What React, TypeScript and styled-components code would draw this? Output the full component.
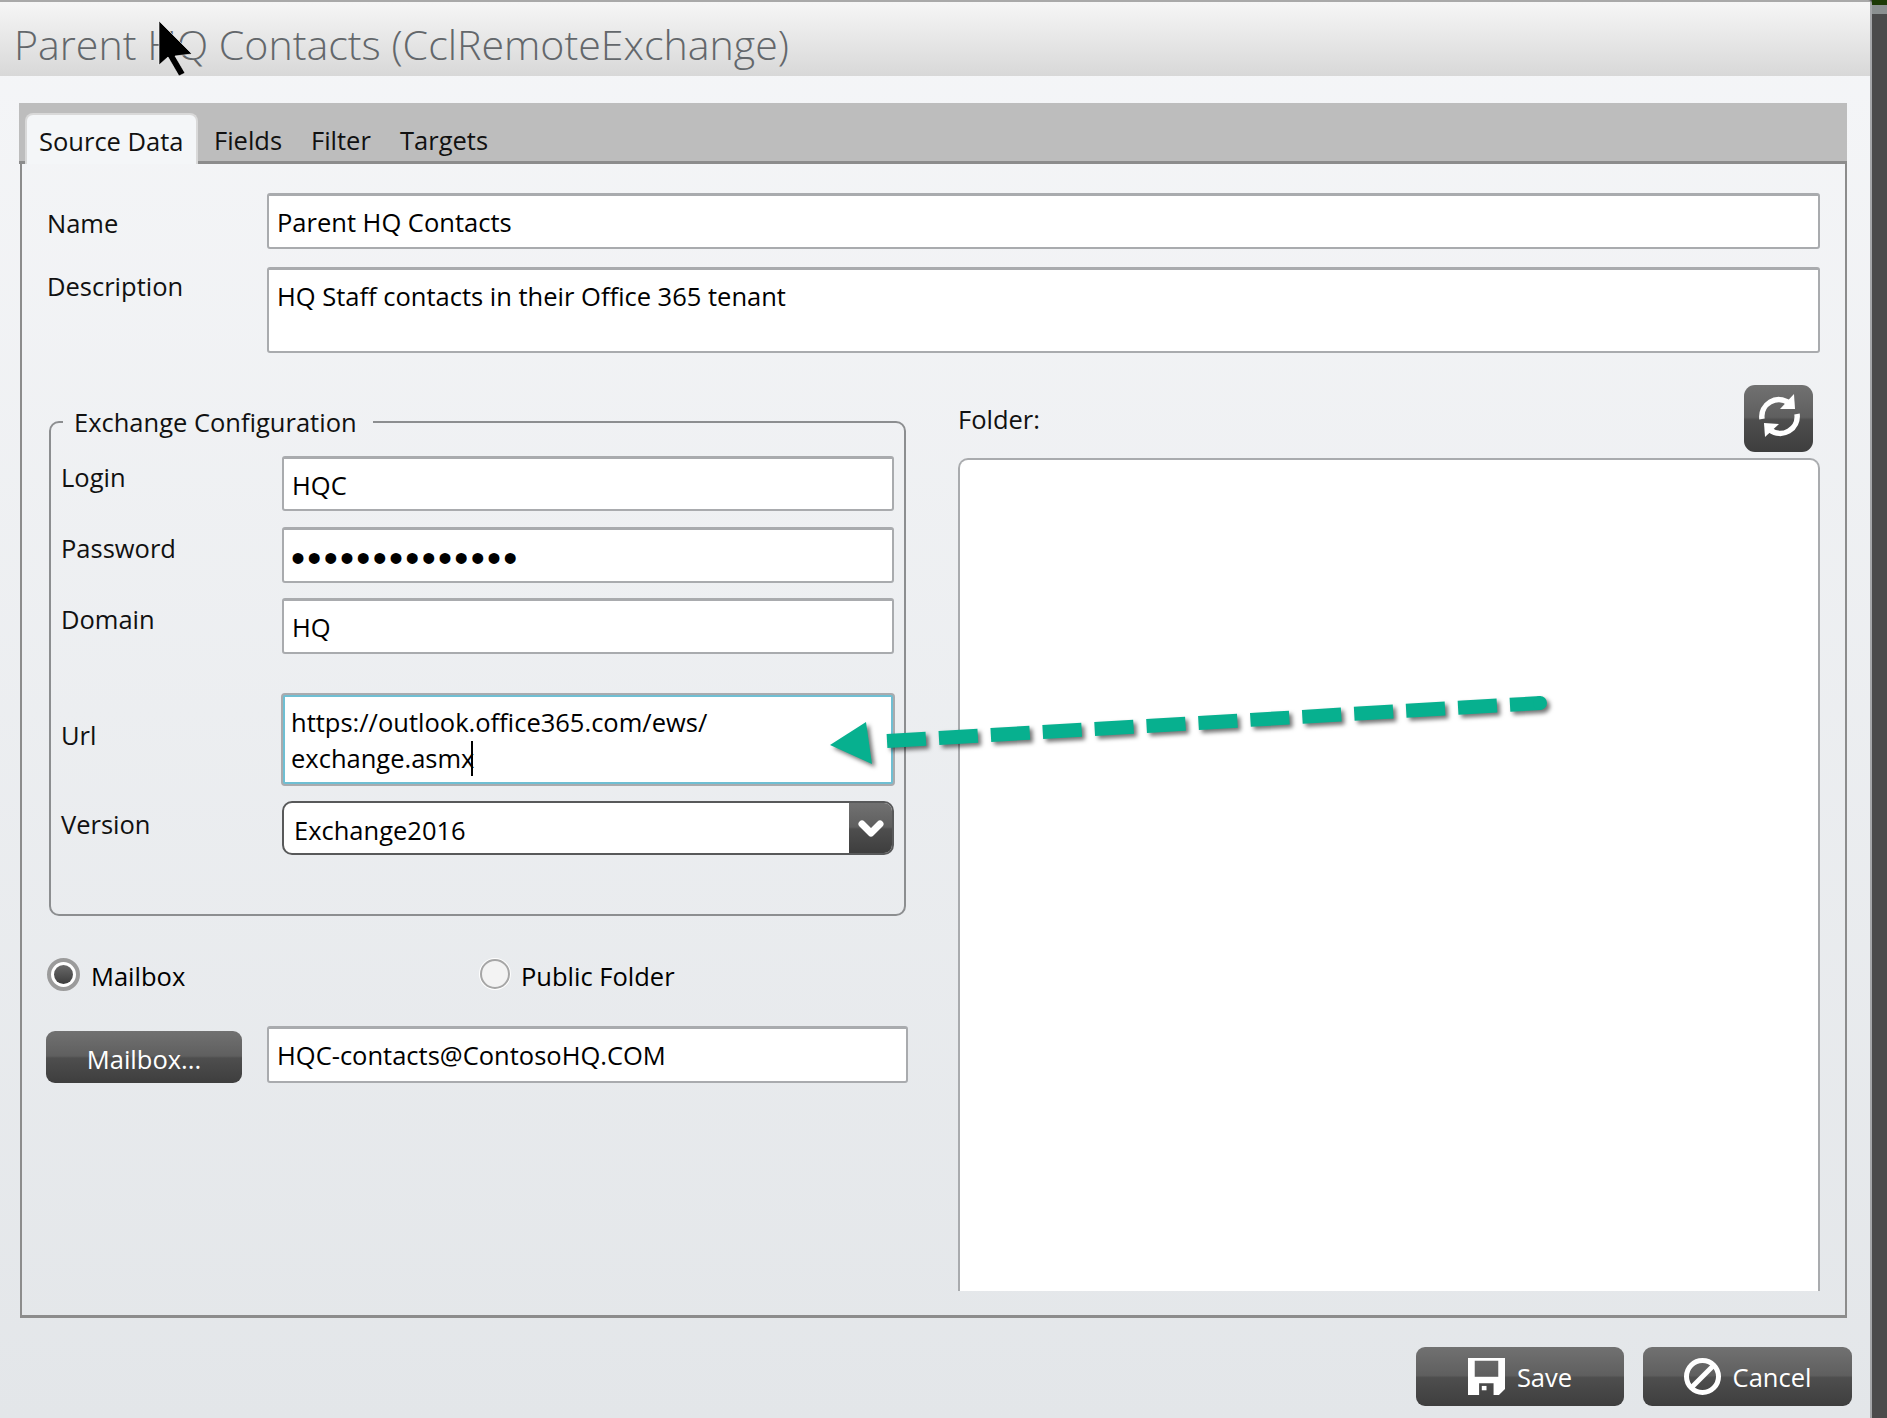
import React from "react";
import styled, { createGlobalStyle } from "styled-components";

const Global = createGlobalStyle`
  html, body { margin: 0; padding: 0; background: #4b4b4b; }
  body { font-family: "Open Sans", "Liberation Sans", sans-serif; font-size: 25.5px; color: #000; }
  * { box-sizing: border-box; }
`;

const Page = styled.div`
  position: relative;
  width: 1887px;
  height: 1418px;
  overflow: hidden;
  display: flex;
  background: #4b4b4b;
`;

const Side = styled.aside`
  flex: 1;
  display: flex;
  flex-direction: column;
`;

const SideGreen = styled.div`
  height: 5px;
  background: #1d3a06;
`;

const SideBand = styled.div`
  height: 9px;
  background: #8b9090;
`;

const Window = styled.div`
  width: 1872px;
  height: 1418px;
  flex: none;
  display: flex;
  flex-direction: column;
  border-top: 2px solid #a9a9a9;
  border-right: 2px solid #a4a6a8;
  border-top-right-radius: 4px;
  background: linear-gradient(180deg, #f5f6f8 0%, #e3e6e9 100%);
`;

const Header = styled.header`
  height: 74px;
  flex: none;
  display: flex;
  align-items: center;
  padding: 10px 0 0 14px;
  background: linear-gradient(180deg, #f6f6f6 0%, #d8d8d8 100%);
`;

const Title = styled.h1`
  margin: 0;
  font-size: 41.13px;
  font-weight: 300;
  color: #63676b;
  white-space: nowrap;
`;

const TabBox = styled.section`
  margin: 27px 23px 0 19px;
  flex: none;
  display: flex;
  flex-direction: column;
`;

const TabStrip = styled.nav`
  height: 61px;
  display: flex;
  align-items: flex-end;
  padding-left: 6px;
  background: #bdbdbd;
  border-bottom: 3px solid #8c8c8c;
`;

const Tab = styled.div<{ $w: number }>`
  height: 42px;
  width: ${(p) => p.$w}px;
  display: flex;
  align-items: center;
  color: #111;
  white-space: nowrap;
`;

const ActiveTab = styled.div<{ $w: number }>`
  height: 51px;
  width: ${(p) => p.$w}px;
  margin: 0 16px -3px 0;
  display: flex;
  align-items: center;
  padding: 3px 0 0 12px;
  background: #f4f6f8;
  border: 2px solid #d9d9d9;
  border-bottom: none;
  border-radius: 8px 8px 0 0;
  color: #111;
  white-space: nowrap;
`;

const TabBody = styled.div`
  height: 1154px;
  width: 1827px;
  margin-left: 1px;
  display: flex;
  flex-direction: column;
  padding: 29px 25px 24px 25px;
  border: 2px solid #8c8c8c;
  border-top: none;
  border-bottom-width: 3px;
`;

const TopRow = styled.div<{ $top?: number }>`
  display: flex;
  margin-top: ${(p) => p.$top ?? 0}px;
`;

const TopLabel = styled.label<{ $pad: number }>`
  width: 220px;
  flex: none;
  padding-top: ${(p) => p.$pad}px;
  color: #111;
`;

const Field = styled.div<{ $h: number; $w?: number }>`
  height: ${(p) => p.$h}px;
  ${(p) => (p.$w ? `width: ${p.$w}px;` : "flex: 1;")}
  flex-shrink: 0;
  padding: 9px 8px 0;
  background: #fff;
  border: 2px solid #a9abae;
  border-top-width: 3px;
  border-radius: 3px;
  white-space: nowrap;
`;

const Columns = styled.div`
  margin-top: 32px;
  height: 906px;
  display: flex;
  gap: 50px;
`;

const LeftCol = styled.div`
  width: 861px;
  flex: none;
  display: flex;
  flex-direction: column;
`;

const Group = styled.fieldset`
  margin: 19px 0 0 2px;
  width: 857px;
  height: 512px;
  padding: 16px 9px 0 10px;
  border: 2px solid #8c8e90;
  border-radius: 10px;
`;

const Legend = styled.legend`
  margin-left: 2px;
  padding: 0 16px 0 11px;
  line-height: 36px;
  color: #111;
`;

const Row = styled.div<{ $top?: number }>`
  display: flex;
  align-items: center;
  margin-top: ${(p) => p.$top ?? 0}px;
`;

const RowLabel = styled.label<{ $lift: number }>`
  width: 221px;
  flex: none;
  padding-bottom: ${(p) => p.$lift}px;
  color: #111;
`;

const Dots = styled.span`
  display: block;
  font-family: "Liberation Sans", sans-serif;
  font-size: 40px;
  line-height: 44px;
  letter-spacing: 2.33px;
  margin: -3px 0 0 -1px;
`;

const UrlField = styled.div`
  width: 612px;
  height: 91px;
  flex: none;
  padding: 7px 6px 0;
  line-height: 36px;
  background: #fff;
  border: 3px solid #6fbfd3;
  outline: 2px solid #a9abae;
  outline-offset: -1px;
  border-radius: 3px;
  white-space: nowrap;
`;

const Caret = styled.span`
  display: inline-block;
  width: 2px;
  height: 35px;
  margin-left: -3px;
  background: #000;
  vertical-align: -8px;
`;

const Select = styled.div`
  width: 612px;
  height: 54px;
  flex: none;
  display: flex;
  background: #fff;
  border: 2px solid #58595a;
  border-radius: 10px;
  overflow: hidden;
`;

const SelectValue = styled.div`
  flex: 1;
  padding: 10px 0 0 10px;
`;

const darkGradient = `linear-gradient(180deg, #717171 0%, #5f5f5f 48%, #4e4e4e 52%, #3e3e3e 100%)`;

const SelectDrop = styled.div`
  width: 43px;
  display: flex;
  align-items: center;
  justify-content: center;
  background: ${darkGradient};
`;

const RadioRow = styled.div`
  margin: 41px 0 0 0;
  height: 34px;
  display: flex;
  align-items: center;
`;

const RadioOption = styled.div<{ $w?: number }>`
  display: flex;
  align-items: center;
  gap: 11px;
  width: ${(p) => p.$w ?? 300}px;
`;

const RadioText = styled.span`
  padding-top: 3px;
`;

const RadioOn = styled.span`
  width: 33px;
  height: 33px;
  flex: none;
  border-radius: 50%;
  border: 4px solid #9b9b9b;
  background: #fff;
  display: flex;
  align-items: center;
  justify-content: center;
  &::after {
    content: "";
    width: 19px;
    height: 19px;
    border-radius: 50%;
    background: linear-gradient(180deg, #6a6a6a, #3c3c3c);
  }
`;

const RadioOff = styled.span`
  width: 30px;
  height: 30px;
  flex: none;
  border-radius: 50%;
  border: 2px solid #a6a6a6;
  background: #f3f3f3;
  box-shadow: 0 0 0 1px #fff;
`;

const MailRow = styled.div`
  margin-top: 35px;
  display: flex;
  align-items: flex-end;
`;

const Button = styled.button<{ $w: number; $h: number; $r?: number }>`
  width: ${(p) => p.$w}px;
  height: ${(p) => p.$h}px;
  flex: none;
  display: flex;
  align-items: center;
  justify-content: center;
  gap: 12px;
  padding: 0;
  border: none;
  border-radius: ${(p) => p.$r ?? 9}px;
  background: ${darkGradient};
  color: #fff;
  font: inherit;
`;

const MailButton = styled(Button)`
  margin: 0 25px 0 -1px;
  padding-top: 3px;
`;

const RefreshButton = styled(Button)`
  padding-bottom: 6px;
`;

const RightCol = styled.div`
  flex: 1;
  display: flex;
  flex-direction: column;
  min-width: 0;
`;

const FolderHead = styled.div`
  height: 67px;
  flex: none;
  display: flex;
  justify-content: space-between;
  padding-right: 7px;
`;

const FolderLabel = styled.label`
  padding-top: 17px;
  color: #111;
`;

const FolderBox = styled.div`
  margin-top: 6px;
  flex: 1;
  background: #fff;
  border: 2px solid #a9abae;
  border-bottom: none;
  border-radius: 10px 10px 0 0;
`;

const Footer = styled.footer`
  margin-top: 29px;
  display: flex;
  justify-content: flex-end;
  gap: 19px;
  padding-right: 18px;
`;

const Overlay = styled.svg`
  position: absolute;
  left: 0;
  top: 0;
  pointer-events: none;
`;

const ArrowOverlay = styled(Overlay)`
  filter: drop-shadow(3px 3px 2px rgba(0, 0, 0, 0.55));
`;

export default function App() {
  return (
    <>
      <Global />
      <Page>
        <Window>
          <Header>
            <Title>Parent HQ Contacts (CclRemoteExchange)</Title>
          </Header>
          <TabBox>
            <TabStrip>
              <ActiveTab $w={173}>Source Data</ActiveTab>
              <Tab $w={97}>Fields</Tab>
              <Tab $w={89}>Filter</Tab>
              <Tab $w={100}>Targets</Tab>
            </TabStrip>
            <TabBody>
              <TopRow>
                <TopLabel $pad={13}>Name</TopLabel>
                <Field $h={56}>Parent HQ Contacts</Field>
              </TopRow>
              <TopRow $top={18}>
                <TopLabel $pad={2}>Description</TopLabel>
                <Field $h={86}>HQ Staff contacts in their Office 365 tenant</Field>
              </TopRow>
              <Columns>
                <LeftCol>
                  <Group>
                    <Legend>Exchange Configuration</Legend>
                    <Row>
                      <RowLabel $lift={13}>Login</RowLabel>
                      <Field $h={55} $w={612}>HQC</Field>
                    </Row>
                    <Row $top={16}>
                      <RowLabel $lift={15}>Password</RowLabel>
                      <Field $h={56} $w={612}><Dots>••••••••••••••</Dots></Field>
                    </Row>
                    <Row $top={15}>
                      <RowLabel $lift={15}>Domain</RowLabel>
                      <Field $h={56} $w={612}>HQ</Field>
                    </Row>
                    <Row $top={40}>
                      <RowLabel $lift={10}>Url</RowLabel>
                      <UrlField>
                        https://outlook.office365.com/ews/
                        <br />
                        exchange.asmx<Caret />
                      </UrlField>
                    </Row>
                    <Row $top={16}>
                      <RowLabel $lift={8}>Version</RowLabel>
                      <Select>
                        <SelectValue>Exchange2016</SelectValue>
                        <SelectDrop>
                          <svg width="28" height="22" viewBox="0 0 28 22" fill="none">
                            <path d="M5 7 L14 16 L23 7" stroke="#fff" strokeWidth="7" strokeLinecap="round" strokeLinejoin="round" />
                          </svg>
                        </SelectDrop>
                      </Select>
                    </Row>
                  </Group>
                  <RadioRow>
                    <RadioOption $w={433}>
                      <RadioOn />
                      <RadioText>Mailbox</RadioText>
                    </RadioOption>
                    <RadioOption>
                      <RadioOff />
                      <RadioText>Public Folder</RadioText>
                    </RadioOption>
                  </RadioRow>
                  <MailRow>
                    <MailButton $w={196} $h={52}>Mailbox...</MailButton>
                    <Field $h={57} $w={641}>HQC-contacts@ContosoHQ.COM</Field>
                  </MailRow>
                </LeftCol>
                <RightCol>
                  <FolderHead>
                    <FolderLabel>Folder:</FolderLabel>
                    <RefreshButton $w={69} $h={67} $r={11}>
                      <svg width="48" height="48" viewBox="-24 -24 48 48" fill="none">
                        <path d="M-17 3 A17 17 0 0 1 10 -13" stroke="#fff" strokeWidth="5.5" />
                        <path d="M15 -22 L16 -7 L1 -7 Z" fill="#fff" />
                        <path d="M18 -2 A17 17 0 0 1 -9 14" stroke="#fff" strokeWidth="5.5" />
                        <path d="M-14 21 L-15 7 L0 8 Z" fill="#fff" />
                      </svg>
                    </RefreshButton>
                  </FolderHead>
                  <FolderBox />
                </RightCol>
              </Columns>
            </TabBody>
          </TabBox>
          <Footer>
            <Button $w={208} $h={59}>
              <svg width="37" height="37" viewBox="0 0 110 110">
                <path
                  fill="#fff"
                  fillRule="evenodd"
                  d="M0 0H110V92L92 110H0Z M20 8V56H90V8Z M33 75V110H76V75Z"
                />
                <rect x="41" y="83" width="14" height="13" fill="#fff" />
              </svg>
              Save
            </Button>
            <Button $w={209} $h={59}>
              <svg width="37" height="37" viewBox="0 0 37 37" fill="none">
                <circle cx="18.5" cy="18.5" r="16" stroke="#fff" strokeWidth="5" />
                <path d="M7 30 L30 7" stroke="#fff" strokeWidth="5" />
              </svg>
              Cancel
            </Button>
          </Footer>
        </Window>
        <Side>
          <SideGreen />
          <SideBand />
        </Side>
        <ArrowOverlay width="1887" height="1418" viewBox="0 0 1887 1418">
          <path
            d="M887 741 L1541 703"
            fill="none"
            stroke="#07b08f"
            strokeWidth="14"
            strokeDasharray="39 13"
          />
          <circle cx="1540" cy="703" r="7" fill="#07b08f" />
          <path d="M830 745 L866 722 L872 764 Z" fill="#07b08f" />
        </ArrowOverlay>
        <Overlay width="1887" height="1418" viewBox="0 0 1887 1418">
          <path
            d="M159 21 L192 54 L175 56 L185 73 L179 76 L168 57 L159 65 Z"
            fill="#000"
            stroke="#fff"
            strokeWidth="0.6"
          />
        </Overlay>
      </Page>
    </>
  );
}
